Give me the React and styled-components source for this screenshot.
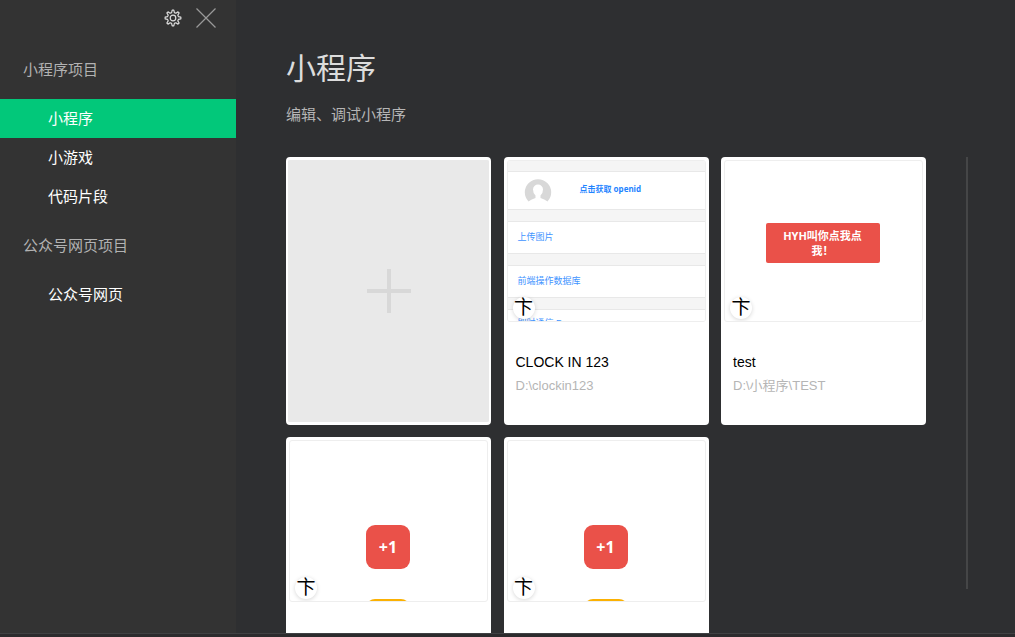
import styled, { createGlobalStyle } from "styled-components";

const GlobalStyle = createGlobalStyle`
  * {
    box-sizing: border-box;
  }

  body {
    margin: 0;
    background: #2e2f31;
    font-family: "Liberation Sans", "Noto Sans CJK SC", sans-serif;
  }

  h1, h2, p, ul {
    margin: 0;
    padding: 0;
    font-weight: normal;
  }

  button {
    padding: 0;
    border: 0;
    background: none;
    font: inherit;
    cursor: pointer;
  }
`;

const Window = styled.div`
  display: flex;
  flex-direction: column;
  height: 100vh;
`;

const Body = styled.div`
  display: flex;
  flex: 1;
  min-height: 0;
`;

const BottomEdge = styled.div`
  height: 4px;
  border-top: 1px solid #404143;
  background: #2c2b2d;
`;

const Sidebar = styled.aside`
  flex: 0 0 236px;
  background: #333333;
`;

const Toolbar = styled.div`
  display: flex;
  justify-content: flex-end;
  gap: 14px;
  height: 40px;
  padding: 7px 20px 0 0;
`;

const ToolButton = styled.button`
  display: flex;
  align-items: center;
  height: 22px;
  color: ${({ $color }) => $color};
`;

const GroupTitle = styled.h2`
  padding-left: 23px;
  color: #b2b2b2;
  font-size: 15px;
  line-height: 59px;
`;

const Menu = styled.ul`
  list-style: none;
`;

const MenuLink = styled.a`
  display: block;
  padding-left: 48px;
  background: ${({ $active }) => ($active ? "#02c87a" : "transparent")};
  color: #ffffff;
  font-size: 15px;
  line-height: 39px;
  text-decoration: none;
`;

const Main = styled.main`
  display: flex;
  flex: 1;
  flex-direction: column;
  min-width: 0;
  padding: 48px 47px 0 50px;
`;

const Title = styled.h1`
  color: #dcdcdc;
  font-size: 30px;
  line-height: 42px;
`;

const Subtitle = styled.p`
  margin-top: 14px;
  color: #b6b6b6;
  font-size: 15px;
  line-height: 22px;
`;

const ListArea = styled.div`
  display: flex;
  flex: 1;
  gap: 40px;
  min-height: 0;
  margin-top: 31px;
`;

const ProjectGrid = styled.div`
  display: grid;
  flex: 1;
  grid-template-columns: repeat(auto-fill, 205px);
  grid-auto-rows: 268px;
  justify-content: space-between;
  align-content: start;
  gap: 12px;
  overflow-y: auto;
  scrollbar-width: none;
`;

const ScrollThumb = styled.div`
  width: 2px;
  margin-bottom: 44px;
  background: #454647;
`;

const AddButton = styled.button`
  display: flex;
  align-items: center;
  justify-content: center;
  border: solid #ffffff;
  border-width: 3px 2px;
  border-radius: 4px;
  background: #e9e9e9;
`;

const Card = styled.article`
  padding: 3px;
  border-radius: 4px;
  background: #ffffff;
`;

const Preview = styled.div`
  position: relative;
  height: 162px;
  overflow: hidden;
  border: 1px solid #eeeeee;
  border-radius: 3px;
`;

const Badge = styled.span`
  position: absolute;
  bottom: 2px;
  left: 5px;
  width: 22px;
  height: 22px;
  border-radius: 50%;
  background: #ffffff;
  box-shadow: 0 1px 4px rgba(0, 0, 0, 0.16);
  color: #000000;
  font-size: 19px;
  line-height: 22px;
  text-align: center;
`;

const Name = styled.h2`
  margin-top: 30px;
  padding: 0 9px;
  color: #000000;
  font-size: 14px;
  line-height: 20px;
`;

const Path = styled.p`
  margin-top: 4px;
  padding: 0 9px;
  color: #b5b5b5;
  font-size: 13px;
  line-height: 20px;
`;

const CloudPage = styled.div`
  display: flex;
  flex-direction: column;
  gap: 11px;
  padding-top: 10px;
  background: #f5f5f5;
`;

const CloudRow = styled.div`
  display: flex;
  align-items: center;
  height: 33px;
  padding: 0 10px 2px;
  border: solid #e8e8e8;
  border-width: 1px 0;
  background: #ffffff;
  color: #3f94ff;
  font-size: 9px;
`;

const UserRow = styled(CloudRow)`
  gap: 28px;
  height: 39px;
  padding: 0 16px;
  color: #1f84ff;
  font-size: 8px;
  font-weight: bold;
`;

const OpenIdLabel = styled.span`
  padding-bottom: 5px;
  font-family: "Noto Sans", "Noto Sans CJK SC", sans-serif;
`;

const LastCloudRow = styled(CloudRow)`
  height: 29px;
`;

const TestPage = styled.div`
  display: flex;
  align-items: center;
  justify-content: center;
  height: 100%;
  padding: 4px 2px 0 0;
`;

const TestButton = styled.span`
  width: 114px;
  padding: 5px 15px;
  border-radius: 2px;
  background: #ea5149;
  color: #ffffff;
  font-family: "Noto Sans", "Noto Sans CJK SC", sans-serif;
  font-size: 11px;
  font-weight: bold;
  line-height: 15px;
  text-align: center;
`;

const CounterPage = styled.div`
  display: flex;
  flex-direction: column;
  align-items: center;
  gap: 30px;
  padding: 84px 1px 0 0;
`;

const CounterButton = styled.span`
  flex: none;
  width: 44px;
  height: 44px;
  border-radius: 9px;
  background: ${({ $color }) => $color};
  color: #ffffff;
  font-family: "Noto Sans", sans-serif;
  font-size: 16px;
  font-weight: bold;
  line-height: 44px;
  text-align: center;
`;

const groups = [
  { title: "小程序项目", items: ["小程序", "小游戏", "代码片段"] },
  { title: "公众号网页项目", items: ["公众号网页"] },
];

const projects = [
  { id: 1, name: "CLOCK IN 123", path: "D:\\clockin123", page: CloudPreview },
  { id: 2, name: "test", path: "D:\\小程序\\TEST", page: TestPreview },
  { id: 3, page: CounterPreview },
  { id: 4, page: CounterPreview },
];

// one tooth as [share of a tooth's turn, radius]
const tooth = [
  [-0.32, 5.6],
  [-0.13, 7.9],
  [0.13, 7.9],
  [0.32, 5.6],
];

function GearIcon() {
  const points = [];
  for (let i = 0; i < 8; i++) {
    tooth.forEach(([turn, r]) => {
      const angle = ((i + turn) * Math.PI) / 4;
      points.push(`${9 + r * Math.sin(angle)},${9 - r * Math.cos(angle)}`);
    });
  }
  return (
    <svg width="18" height="18" fill="none" stroke="currentColor" strokeWidth="1.2" strokeLinejoin="round">
      <polygon points={points.join(" ")} />
      <circle cx="9" cy="9" r="2.8" />
    </svg>
  );
}

function CloseIcon() {
  return (
    <svg width="20" height="20" fill="none" stroke="currentColor" strokeWidth="1.2">
      <path d="M0.5 0.5 19.5 19.5M19.5 0.5 0.5 19.5" />
    </svg>
  );
}

function AvatarIcon() {
  return (
    <svg width="28" height="28" viewBox="0 0 28 28">
      <path
        fill="#d8d8d8"
        d="M4.5 24.5A13.2 13.2 0 1 1 23.5 24.5Q20.5 22 16.5 21V18.5Q19 16.5 19 12.5A5 5 0 0 0 9 12.5Q9 16.5 11.5 18.5V21Q7.5 22 4.5 24.5Z"
      />
    </svg>
  );
}

function CloudPreview() {
  return (
    <CloudPage>
      <UserRow>
        <AvatarIcon />
        <OpenIdLabel>点击获取 openid</OpenIdLabel>
      </UserRow>
      <CloudRow>上传图片</CloudRow>
      <CloudRow>前端操作数据库</CloudRow>
      <LastCloudRow>即时通信 Demo</LastCloudRow>
    </CloudPage>
  );
}

function TestPreview() {
  return (
    <TestPage>
      <TestButton>HYH叫你点我点我！</TestButton>
    </TestPage>
  );
}

function CounterPreview() {
  return (
    <CounterPage>
      <CounterButton $color="#ea5149">+1</CounterButton>
      <CounterButton $color="#fbb103" />
    </CounterPage>
  );
}

function ProjectCard({ project }) {
  const Page = project.page;

  return (
    <Card>
      <Preview>
        <Page />
        <Badge>卞</Badge>
      </Preview>
      {project.name && <Name>{project.name}</Name>}
      {project.path && <Path>{project.path}</Path>}
    </Card>
  );
}

export default function App() {
  return (
    <Window>
      <GlobalStyle />
      <Body>
        <Sidebar>
          <Toolbar>
            <ToolButton $color="#dddddd" aria-label="设置">
              <GearIcon />
            </ToolButton>
            <ToolButton $color="#999999" aria-label="关闭">
              <CloseIcon />
            </ToolButton>
          </Toolbar>
          <nav>
            {groups.map((group) => (
              <section key={group.title}>
                <GroupTitle>{group.title}</GroupTitle>
                <Menu>
                  {group.items.map((item) => (
                    <li key={item}>
                      <MenuLink href="#" $active={item === "小程序"}>
                        {item}
                      </MenuLink>
                    </li>
                  ))}
                </Menu>
              </section>
            ))}
          </nav>
        </Sidebar>
        <Main>
          <Title>小程序</Title>
          <Subtitle>编辑、调试小程序</Subtitle>
          <ListArea>
            <ProjectGrid>
              <AddButton aria-label="新建项目">
                <svg width="44" height="44" fill="#d8d8d8">
                  <path d="M20 0h4v20h20v4H24v20h-4V24H0v-4h20z" />
                </svg>
              </AddButton>
              {projects.map((project) => (
                <ProjectCard key={project.id} project={project} />
              ))}
            </ProjectGrid>
            <ScrollThumb />
          </ListArea>
        </Main>
      </Body>
      <BottomEdge />
    </Window>
  );
}
